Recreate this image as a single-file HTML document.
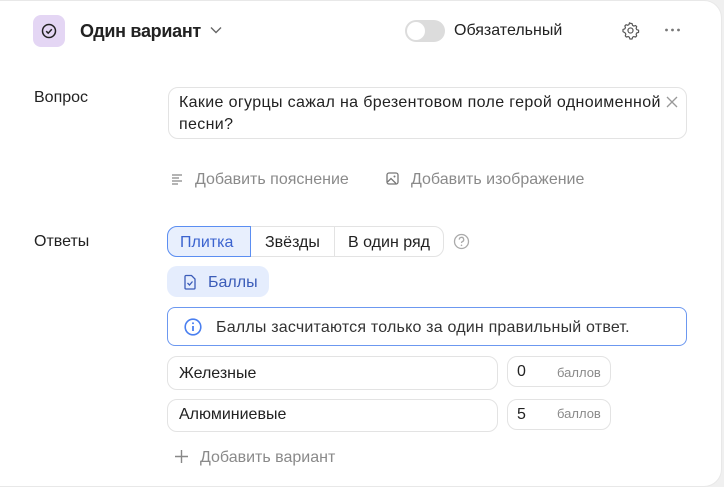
<!DOCTYPE html>
<html><head><meta charset="utf-8"><style>
*{box-sizing:border-box;margin:0;padding:0}
body{width:724px;height:486px;overflow:hidden;background:#f0f0f0;font-family:"Liberation Sans",sans-serif;color:#222;position:relative}
.card{position:absolute;left:-20px;top:0;width:742px;height:487px;background:#fff;border-radius:18px;border:1px solid #e8e8e8}
.a{position:absolute;white-space:nowrap}
.f15{font-size:16px}
.gray{color:#8a8a8a}
.inp{position:absolute;border:1px solid #e3e3e3;border-radius:10px;background:#fff}
</style></head><body>
<div class="card"></div>
<div class="a" style="left:33px;top:15px;width:32px;height:32px;background:#e4d6f4;border-radius:8px"></div>
<svg class="a" style="left:40px;top:22px" width="18" height="18" viewBox="0 0 18 18"><circle cx="9" cy="9" r="6.5" fill="none" stroke="#222" stroke-width="1.5"/><path d="M6.2 9.2l2 2 3.6-4" fill="none" stroke="#222" stroke-width="1.5"/></svg>
<div class="a" style="left:80px;top:19px;font-size:18px;font-weight:bold;line-height:24px;letter-spacing:-0.3px">Один вариант</div>
<svg class="a" style="left:209px;top:25px" width="14" height="10" viewBox="0 0 14 10"><path d="M2 2.5l5 5 5-5" fill="none" stroke="#666" stroke-width="1.4"/></svg>
<div class="a" style="left:405px;top:20px;width:40px;height:22px;background:#dcdcdc;border-radius:11px"></div>
<div class="a" style="left:407px;top:22px;width:18px;height:18px;background:#fff;border-radius:50%"></div>
<div class="a f15" style="left:454px;top:22px;line-height:18px">Обязательный</div>
<svg class="a" style="left:621px;top:21px" width="19" height="19" viewBox="0 0 24 24"><path d="M12 3l2 .3.6 2.2 1.6.9 2.2-.7 1.4 1.5-.7 2.2.9 1.6 2.2.6v2.8l-2.2.6-.9 1.6.7 2.2-1.4 1.5-2.2-.7-1.6.9-.6 2.2h-2.8l-.6-2.2-1.6-.9-2.2.7-1.4-1.5.7-2.2-.9-1.6L2.5 13.4v-2.8l2.2-.6.9-1.6-.7-2.2 1.4-1.5 2.2.7 1.6-.9.6-2.2z" fill="none" stroke="#555" stroke-width="1.5" stroke-linejoin="round"/><circle cx="12" cy="12" r="3.2" fill="none" stroke="#555" stroke-width="1.5"/></svg>
<svg class="a" style="left:664px;top:27px" width="17" height="6" viewBox="0 0 17 6"><circle cx="2.5" cy="3" r="1.4" fill="#777"/><circle cx="8.5" cy="3" r="1.4" fill="#777"/><circle cx="14.5" cy="3" r="1.4" fill="#777"/></svg>
<div class="a f15" style="left:34px;top:89px">Вопрос</div>
<div class="inp" style="left:168px;top:87px;width:519px;height:52px"></div>
<div class="a" style="left:179px;top:92px;line-height:22px;font-size:16px;letter-spacing:0.35px">Какие огурцы сажал на брезентовом поле герой одноименной<br>песни?</div>
<svg class="a" style="left:665px;top:95px" width="14" height="14" viewBox="0 0 14 14"><path d="M2 2l10 10M12 2L2 12" stroke="#999" stroke-width="1.3"/></svg>
<svg class="a" style="left:170px;top:172px" width="14" height="14" viewBox="0 0 14 14"><path d="M2 3h10M2 6h7M2 9h10M2 12h6" stroke="#888" stroke-width="1.2"/></svg>
<div class="a f15 gray" style="left:195px;top:171px">Добавить пояснение</div>
<svg class="a" style="left:385px;top:171px" width="15" height="15" viewBox="0 0 15 15"><rect x="2" y="2" width="11" height="11" rx="2" fill="none" stroke="#777" stroke-width="1.3"/><circle cx="9.5" cy="5.5" r="1" fill="#777"/><path d="M2.5 11l3.5-3.5 5 5" fill="none" stroke="#777" stroke-width="1.3"/></svg>
<div class="a f15 gray" style="left:411px;top:171px">Добавить изображение</div>
<div class="a f15" style="left:34px;top:233px">Ответы</div>
<div class="a" style="left:167px;top:226px;width:277px;height:31px;border:1px solid #e3e3e3;border-radius:10px"></div>
<div class="a" style="left:167px;top:226px;width:84px;height:31px;border:1px solid #5b8ef2;background:#e8effd;border-radius:10px 0 0 10px"></div>
<div class="a" style="left:334px;top:227px;width:1px;height:29px;background:#e3e3e3"></div>
<div class="a f15" style="left:180px;top:234px;color:#3b63cf">Плитка</div>
<div class="a f15" style="left:265px;top:234px">Звёзды</div>
<div class="a f15" style="left:348px;top:234px">В один ряд</div>
<svg class="a" style="left:453px;top:233px" width="17" height="17" viewBox="0 0 17 17"><circle cx="8.5" cy="8.5" r="7" fill="none" stroke="#aaa" stroke-width="1.3"/><path d="M6.3 6.6a2.2 2.2 0 1 1 3 2c-.6.3-.8.7-.8 1.4" fill="none" stroke="#aaa" stroke-width="1.3"/><circle cx="8.5" cy="12.3" r=".8" fill="#aaa"/></svg>
<div class="a" style="left:167px;top:266px;width:102px;height:31px;background:#e5edfd;border-radius:10px"></div>
<svg class="a" style="left:183px;top:274px" width="14" height="16" viewBox="0 0 14 16"><path d="M2 2.5a1 1 0 0 1 1-1h5.5l3.5 3.5v9a1 1 0 0 1-1 1H3a1 1 0 0 1-1-1z" fill="none" stroke="#3b5cb8" stroke-width="1.3"/><path d="M4.5 9l2 2 3-3.5" fill="none" stroke="#3b5cb8" stroke-width="1.3"/></svg>
<div class="a f15" style="left:208px;top:274px;color:#3b5cb8">Баллы</div>
<div class="a" style="left:167px;top:307px;width:520px;height:39px;border:1px solid #6c98f0;border-radius:8px"></div>
<svg class="a" style="left:183px;top:317px" width="20" height="20" viewBox="0 0 20 20"><circle cx="10" cy="10" r="7.8" fill="none" stroke="#4a7ff0" stroke-width="1.6"/><path d="M10 9v5" stroke="#4a7ff0" stroke-width="1.8"/><circle cx="10" cy="6.2" r="1" fill="#4a7ff0"/></svg>
<div class="a f15" style="left:216px;top:319px;color:#333;letter-spacing:0.2px">Баллы засчитаются только за один правильный ответ.</div>
<div class="inp" style="left:167px;top:356px;width:331px;height:34px"></div>
<div class="a f15" style="left:179px;top:365px">Железные</div>
<div class="inp" style="left:507px;top:356px;width:104px;height:31px"></div>
<div class="a f15" style="left:517px;top:363px">0</div>
<div class="a gray" style="left:557px;top:365px;font-size:13px">баллов</div>
<div class="inp" style="left:167px;top:399px;width:331px;height:33px"></div>
<div class="a f15" style="left:179px;top:406px">Алюминиевые</div>
<div class="inp" style="left:507px;top:399px;width:104px;height:31px"></div>
<div class="a f15" style="left:517px;top:406px">5</div>
<div class="a gray" style="left:557px;top:406px;font-size:13px">баллов</div>
<svg class="a" style="left:174px;top:449px" width="15" height="15" viewBox="0 0 15 15"><path d="M7.5 1v13M1 7.5h13" stroke="#888" stroke-width="1.4"/></svg>
<div class="a f15 gray" style="left:200px;top:449px">Добавить вариант</div>
</body></html>
